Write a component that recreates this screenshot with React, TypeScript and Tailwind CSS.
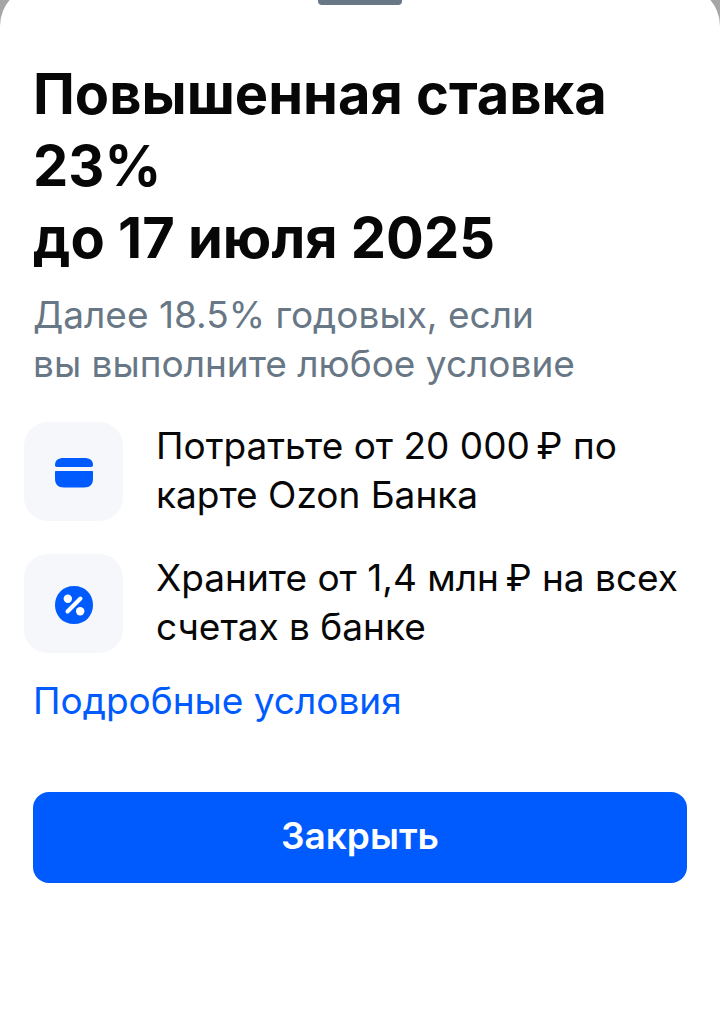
import type { ReactNode } from "react";

const Condition = ({ icon, children }: { icon: ReactNode; children: ReactNode }) => {
  return (
    <li className="flex items-center gap-[33px]">
      <div className="flex size-[99px] shrink-0 items-center justify-center rounded-3xl bg-[#f5f7fb] pt-0.5 text-[#005bff]">
        {icon}
      </div>
      <p className="pb-[3px]">{children}</p>
    </li>
  );
};

const CardIcon = () => (
  <svg width="38" height="30" viewBox="0 0 38 30" fill="currentColor" aria-hidden="true">
    <path d="M0 7C0 2.5 3 0 9 0h20c6 0 9 2.5 9 7 0 1.3-.6 2-2 2H2C.6 9 0 8.3 0 7z" />
    <path d="M0 14c0-.7.3-1 1-1h36c.7 0 1 .3 1 1v6.5c0 6-3 9-9 9H9c-6 0-9-3-9-9z" />
  </svg>
);

const PercentIcon = () => (
  <svg width="38" height="38" viewBox="0 0 38 38" aria-hidden="true">
    <path d="M19 0c11 0 19 8 19 19s-8 19-19 19S0 30 0 19 8 0 19 0z" fill="currentColor" />
    <path d="M12.5 25.5l13-13" stroke="#fff" strokeWidth="4" strokeLinecap="round" />
    <circle cx="12.8" cy="12.8" r="4.2" fill="#fff" />
    <circle cx="25.2" cy="25.2" r="4.2" fill="#fff" />
  </svg>
);

const App = () => {
  return (
    <div className="flex min-h-screen flex-col overflow-hidden bg-[#a6a6a6] font-['Inter','Liberation_Sans',sans-serif] text-[#070707]">
      <main className="-mt-3.5 flex grow flex-col items-center rounded-t-[40px] bg-white pt-3.5">
        <div className="h-[5px] w-[84px] rounded-b-sm bg-[#687785]" />
        <div className="w-full px-[33px] pt-[53px]">
          <h1 className="text-[56px] leading-[72px] font-bold">
            Повышенная ставка 23%
            <br />
            до 17 июля 2025
          </h1>
          <p className="mt-4 text-[37px] leading-[49px] text-[#687785]">
            Далее 18.5% годовых, если
            <br />
            вы выполните любое условие
          </p>
          <ul className="-mx-[9px] mt-[33px] flex flex-col gap-[31px] text-[37px] leading-[49px]">
            <Condition icon={<CardIcon />}>
              Потратьте от 20 000{"\u2009"}₽ по
              <br />
              карте Ozon Банка
            </Condition>
            <Condition icon={<PercentIcon />}>
              Храните от 1,4 млн{"\u2009"}₽ на всех
              <br />
              счетах в банке
            </Condition>
          </ul>
          <a href="#conditions" className="mt-[22px] block w-fit text-[37px] leading-[49px] text-[#005bff]">
            Подробные условия
          </a>
          <button
            type="button"
            className="mt-[67px] h-[91px] w-full rounded-2xl bg-[#005bff] pb-1 text-[37px] font-semibold text-white"
          >
            Закрыть
          </button>
        </div>
      </main>
    </div>
  );
};

export default App;
